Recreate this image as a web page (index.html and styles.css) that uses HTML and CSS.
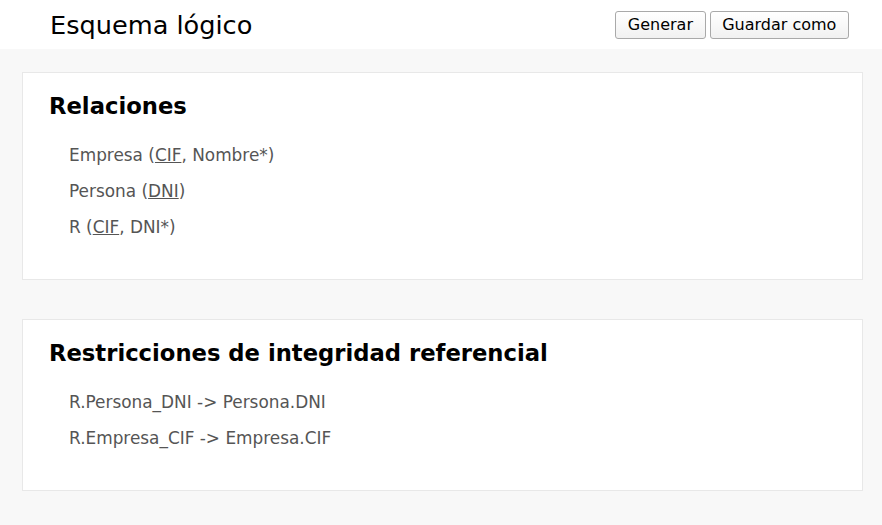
FILE: index.html
```html
<!DOCTYPE html>
<html lang="es">
<head>
<meta charset="utf-8">
<title>Esquema lógico</title>
<link rel="stylesheet" href="styles.css">
</head>
<body>
<header class="topbar">
  <h1 class="title">Esquema lógico</h1>
  <div class="actions">
    <button class="btn">Generar</button>
    <button class="btn">Guardar como</button>
  </div>
</header>
<main class="content">
  <section class="card">
    <h2 class="card-title">Relaciones</h2>
    <ul class="items">
      <li>Empresa (<u>CIF</u>, Nombre*)</li>
      <li>Persona (<u>DNI</u>)</li>
      <li>R (<u>CIF</u>, DNI*)</li>
    </ul>
  </section>
  <section class="card">
    <h2 class="card-title">Restricciones de integridad referencial</h2>
    <ul class="items">
      <li>R.Persona_DNI -&gt; Persona.DNI</li>
      <li>R.Empresa_CIF -&gt; Empresa.CIF</li>
    </ul>
  </section>
</main>
</body>
</html>
```
FILE: styles.css
```css
html, body {
  margin: 0;
  padding: 0;
}
body {
  background: #f8f8f8;
  font-family: "DejaVu Sans", Verdana, sans-serif;
  color: #000;
}
.topbar {
  background: #fff;
  height: 49px;
  display: flex;
  align-items: center;
  justify-content: space-between;
  padding: 0 33px 0 50px;
}
.title {
  margin: 0;
  font-size: 25.6px;
  font-weight: normal;
  line-height: 30px;
}
.actions {
  display: flex;
  gap: 4px;
}
.btn {
  font-family: "DejaVu Sans", Verdana, sans-serif;
  font-size: 16px;
  color: #000;
  height: 28px;
  padding: 0 11.6px;
  border: 1px solid #a9a9a9;
  border-radius: 3px;
  background: linear-gradient(#ffffff, #f1f1f1);
}
.content {
  padding: 23px 19px 34px 22px;
  display: flex;
  flex-direction: column;
  gap: 39px;
}
.card {
  background: #fff;
  border: 1px solid #e8e8e8;
  padding: 19px 26px 34px;
}
.card-title {
  margin: 0;
  font-size: 22.7px;
  line-height: 28px;
  font-weight: bold;
}
.items {
  list-style: none;
  margin: 17px 0 0;
  padding: 0 0 0 20px;
  color: #555;
  font-size: 16.9px;
  line-height: 36px;
}
.items u {
  text-decoration: underline;
}
```
